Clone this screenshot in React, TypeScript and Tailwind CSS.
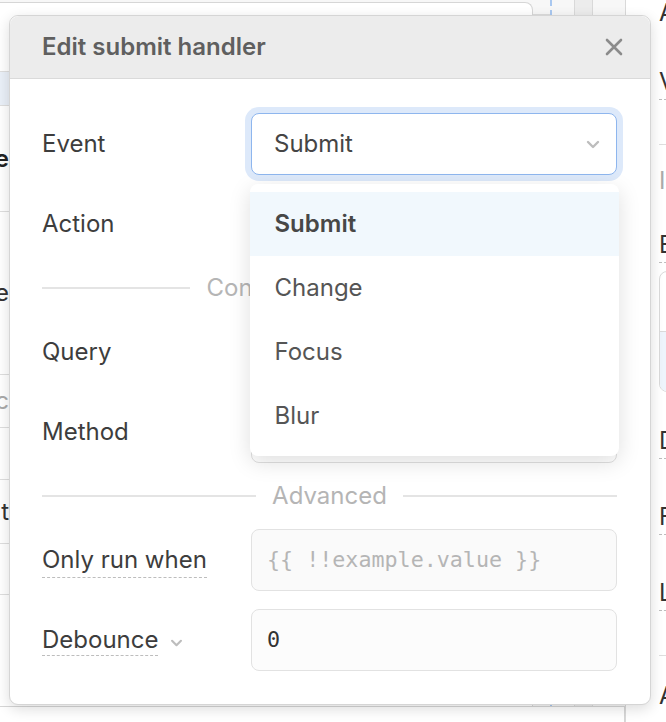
import React from "react";

type Opt = { label: string; active?: boolean };

const events: Opt[] = [
  { label: "Submit", active: true },
  { label: "Change" },
  { label: "Focus" },
  { label: "Blur" },
];

const canvasRows = [
  { h: "h-[69px]", text: "", cls: "" },
  { h: "h-[34px]", text: "", cls: "bg-[#eaf0f8]" },
  { h: "h-[106px]", text: "Name", cls: "font-semibold text-[#222]" },
  { h: "h-[163px]", text: "Type", cls: "text-[#333]" },
  { h: "h-[53px]", text: "Desc", cls: "text-[#aaa]" },
  { h: "h-[52px]", text: "", cls: "" },
  { h: "h-[64px]", text: "Text", cls: "text-[#333]" },
  { h: "h-[51px]", text: "", cls: "" },
];

function ChevronDown({ className = "" }: { className?: string }) {
  return (
    <svg
      viewBox="0 0 14 9"
      fill="none"
      stroke="currentColor"
      strokeWidth={2.4}
      strokeLinecap="round"
      strokeLinejoin="round"
      className={className}
    >
      <path d="M2 2l5 5 5-5" />
    </svg>
  );
}

function CloseIcon() {
  return (
    <svg
      viewBox="0 0 20 20"
      fill="none"
      stroke="currentColor"
      strokeWidth={2.6}
      strokeLinecap="round"
      className="h-[20px] w-[20px] text-[#8b8b8b]"
    >
      <path d="M3 3l14 14M17 3L3 17" />
    </svg>
  );
}

function Row({ label, children }: { label: React.ReactNode; children: React.ReactNode }) {
  return (
    <div className="grid grid-cols-[209px_1fr] items-center h-[62px]">
      <div className="text-[24px] text-[#3d3d3d]">{label}</div>
      {children}
    </div>
  );
}

function Select({
  value,
  focused,
  children,
}: {
  value: string;
  focused?: boolean;
  children?: React.ReactNode;
}) {
  return (
    <div
      className={`relative h-[62px] rounded-[8px] border-[1.5px] bg-white flex items-center justify-between pl-[22px] pr-[16px] ${
        focused ? "border-[#8eb6ee] shadow-[0_0_0_6px_#dde9fa]" : "border-[#e0e0e0]"
      }`}
    >
      <span className="text-[24px] text-[#454545]">{value}</span>
      <ChevronDown className="w-[14px] h-[9px] text-[#bdbdbd]" />
      {children}
    </div>
  );
}

function Divider({ label }: { label: string }) {
  return (
    <div className="h-[30px] flex items-center gap-[16px]">
      <div className="flex-1 h-[2px] bg-[#e4e4e4]" />
      <span className="text-[24px] leading-none text-[#b5b5b5]">{label}</span>
      <div className="flex-1 h-[2px] bg-[#e4e4e4]" />
    </div>
  );
}

function DashedLabel({ text }: { text: string }) {
  return (
    <span className="leading-none pb-[3px] border-b-[1.5px] border-dashed border-[#bdbdbd]">
      {text}
    </span>
  );
}

function Background() {
  return (
    <div className="flex h-full">
      <div className="w-[625px] flex flex-col">
        <div className="flex flex-1">
          <div className="w-[533px] mt-[2px] bg-white border-t border-r border-[#d6d6d6] rounded-tr-[8px] flex flex-col">
            {canvasRows.map((r, i) => (
              <div key={i} className={`${r.h} border-b border-[#dedede] flex items-center ${r.cls}`}>
                <div className="w-[9px] overflow-hidden flex justify-end whitespace-nowrap text-[24px]">
                  {r.text}
                </div>
              </div>
            ))}
          </div>
          <div className="flex-1 flex bg-[#f7f7f7]">
            <div className="w-[17px] h-[15px] border-b border-[#dcdcdc]" />
            <div className="w-[24px] border-l-2 border-dashed border-[#a9c8f0]" />
            <div className="w-[19px] bg-[#ececec] border-x border-[#d9d9d9]" />
            <div className="flex-1" />
          </div>
        </div>
        <div className="h-[16px] bg-white border-t border-r border-[#d6d6d6]" />
      </div>
      <div className="flex-1 bg-white border-l border-[#d9d9d9] pl-[33px] overflow-hidden">
        <div className="flex flex-col items-start text-[24px] leading-none text-[#333] whitespace-nowrap">
          <div className="mt-[1px]">Add-ons</div>
          <div className="mt-[45px]">
            <DashedLabel text="Value" />
          </div>
          <div className="mt-[50px] h-px w-full bg-[#dedede]" />
          <div className="mt-[24px] text-[#aaa]">Interaction</div>
          <div className="mt-[40px]">
            <DashedLabel text="Behavior" />
          </div>
          <div className="mt-[14px] h-[121px] w-[200px] rounded-[8px] border border-[#dadada] flex flex-col overflow-hidden">
            <div className="h-[60px] border-b border-[#dadada]" />
            <div className="flex-1 bg-[#eef4fc]" />
          </div>
          <div className="mt-[37px]">
            <DashedLabel text="Disabled" />
          </div>
          <div className="mt-[52px]">
            <DashedLabel text="Form data" />
          </div>
          <div className="mt-[52px]">
            <DashedLabel text="Loading" />
          </div>
          <div className="mt-[50px] h-px w-full bg-[#dedede]" />
          <div className="mt-[28px]">Appearance</div>
        </div>
      </div>
    </div>
  );
}

export default function App() {
  return (
    <div className="relative w-[666px] h-[722px] overflow-hidden bg-[#f7f7f7] [font-family:Inter,'Noto_Sans',sans-serif]">
      <Background />

      <div className="absolute left-[9px] top-[15px] w-[642px] h-[690px] bg-white border border-[#d5d5d5] rounded-[9px] shadow-[0_4px_14px_rgba(0,0,0,0.14)]">
        <div className="h-[63px] bg-[#ececec] border-b border-[#dadada] rounded-t-[9px] flex items-center justify-between pl-[32px] pr-[26px]">
          <h2 className="text-[24px] font-semibold text-[#5f5f5f]">Edit submit handler</h2>
          <CloseIcon />
        </div>

        <div className="pt-[34px] pl-[32px] pr-[33px] flex flex-col gap-[18px]">
          <Row label="Event">
            <Select value="Submit" focused>
              <div className="absolute left-[-2.5px] right-[-2.5px] top-[calc(100%+10px)] z-10 bg-white rounded-[8px] py-[8px] shadow-[0_6px_22px_rgba(0,0,0,0.13)]">
                {events.map((o) => (
                  <div
                    key={o.label}
                    className={`h-[64px] flex items-center pl-[25px] text-[24px] ${
                      o.active ? "bg-[#f1f8fd] font-semibold text-[#474747]" : "text-[#555]"
                    }`}
                  >
                    {o.label}
                  </div>
                ))}
              </div>
            </Select>
          </Row>
          <Row label="Action">
            <Select value="Control query" />
          </Row>
          <Divider label="Control query options" />
          <Row label="Query">
            <Select value="query1" />
          </Row>
          <Row label="Method">
            <Select value="Trigger" />
          </Row>
          <Divider label="Advanced" />
          <Row label={<DashedLabel text="Only run when" />}>
            <div className="h-[62px] rounded-[8px] border-[1.5px] border-[#e2e2e2] bg-[#fafafa] flex items-center pl-[15px] [font-family:'DejaVu_Sans_Mono',monospace] text-[21.7px] text-[#b5b5b5]">
              {"{{ !!example.value }}"}
            </div>
          </Row>
          <Row
            label={
              <div className="flex items-center gap-[12px] mt-[3px]">
                <DashedLabel text="Debounce" />
                <ChevronDown className="w-[13px] h-[8px] text-[#bdbdbd] mt-[2px]" />
              </div>
            }
          >
            <div className="h-[62px] rounded-[8px] border-[1.5px] border-[#e2e2e2] bg-[#fcfcfc] flex items-center pl-[15px] [font-family:'DejaVu_Sans_Mono',monospace] text-[21.7px] text-[#333]">
              0
            </div>
          </Row>
        </div>
      </div>
    </div>
  );
}
